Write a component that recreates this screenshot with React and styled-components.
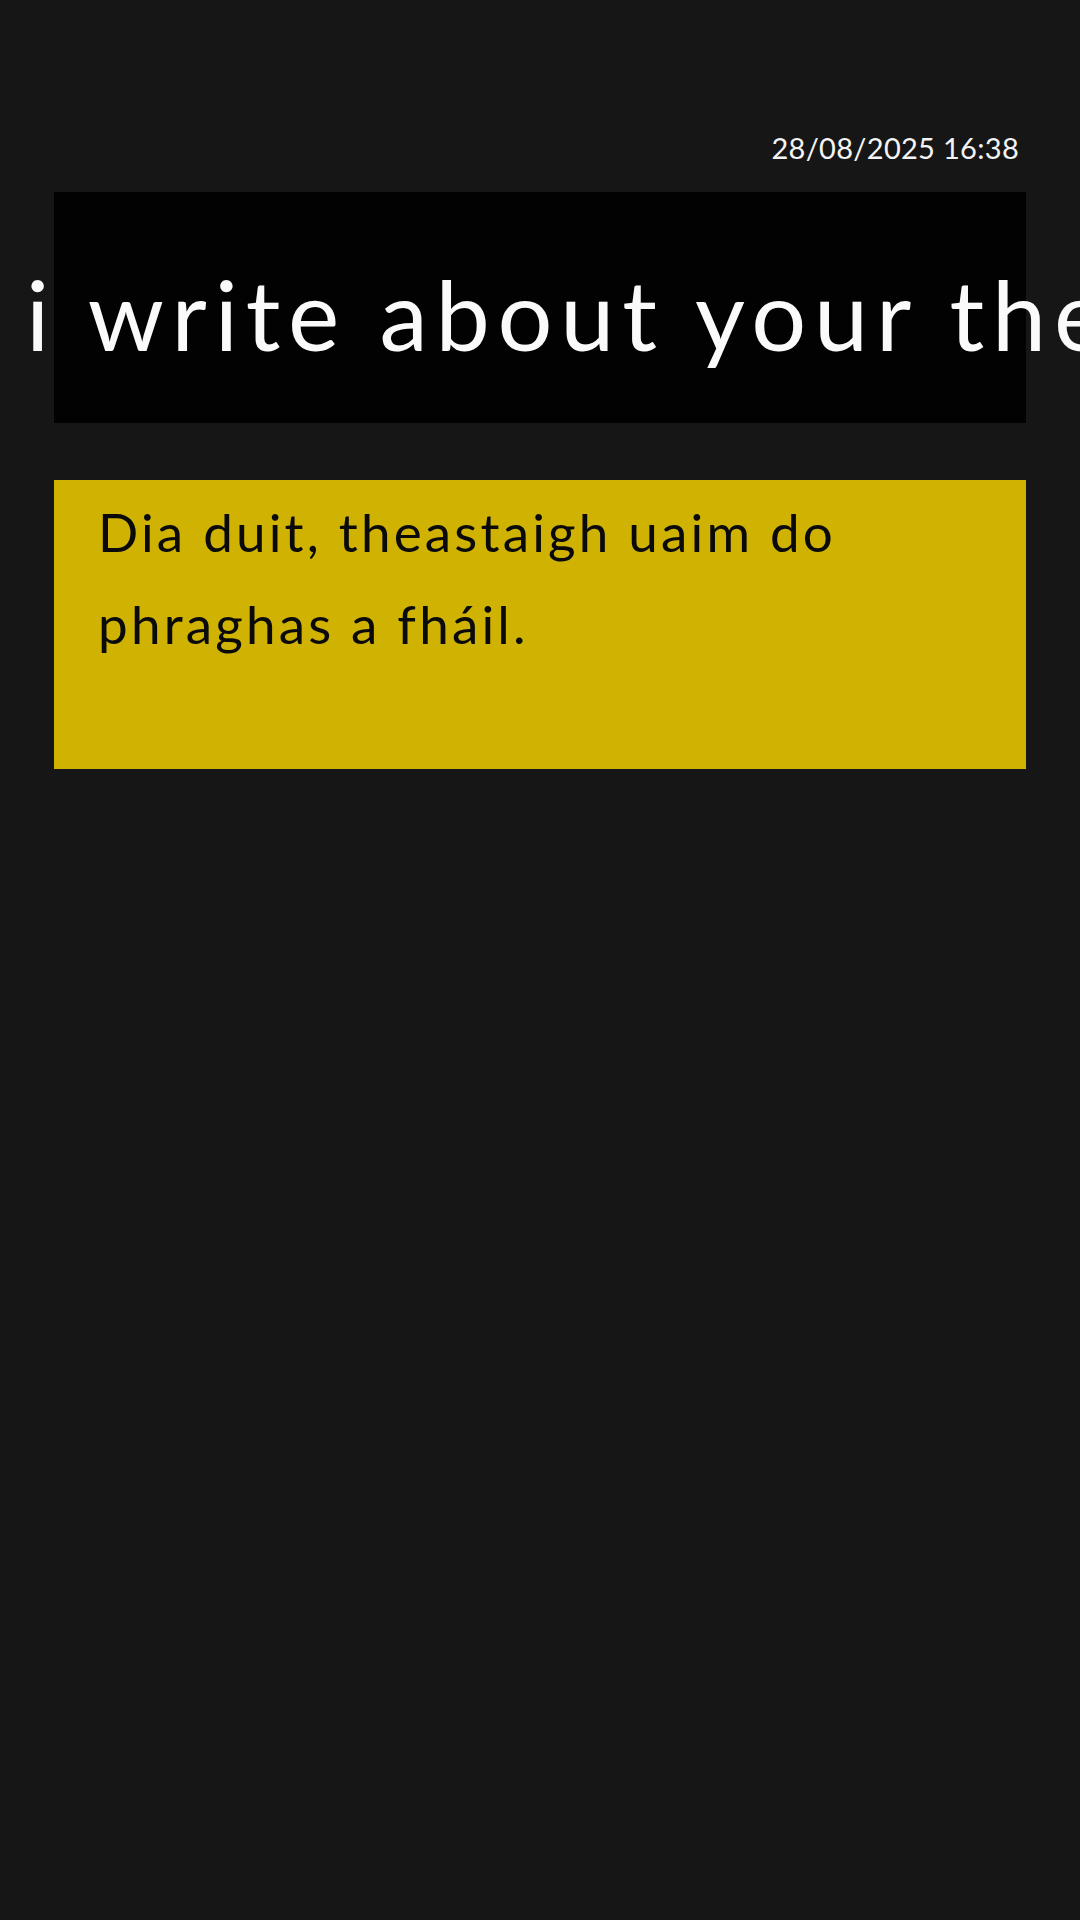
import React from 'react'
import styled, { createGlobalStyle } from 'styled-components'

const GlobalStyle = createGlobalStyle`
  html, body {
    margin: 0;
    padding: 0;
    background: #161616;
    overflow-x: hidden;
  }
  body {
    font-family: Lato, "Noto Sans", sans-serif;
  }
`

const Screen = styled.div`
  width: 1080px;
  height: 1920px;
  background: #161616;
  padding: 128px 54px 0 54px;
  box-sizing: border-box;
  display: flex;
  flex-direction: column;
`

const Stamp = styled.div`
  align-self: flex-end;
  margin-right: 7px;
  font-size: 29px;
  letter-spacing: 0.3px;
  line-height: 40px;
  color: #f4f4f4;
  height: 40px;
  margin-bottom: 24px;
`

const TitleBox = styled.div`
  height: 231px;
  background: #020202;
  display: flex;
  align-items: center;
`

const Title = styled.span`
  margin-left: -28px;
  margin-top: 12px;
  white-space: nowrap;
  font-size: 97px;
  letter-spacing: 0.08em;
  line-height: 1;
  color: #fafafa;
`

const Message = styled.div`
  margin-top: 57px;
  height: 289px;
  box-sizing: border-box;
  background: #d0b302;
  padding: 6px 60px 0 44px;
  font-size: 53px;
  letter-spacing: 0.06em;
  line-height: 92px;
  color: #0a0a0a;
`

const App = () => {
  return (
    <>
      <GlobalStyle />
      <Screen>
        <Stamp>28/08/2025 16:38</Stamp>
        <TitleBox>
          <Title>i write about your thesis</Title>
        </TitleBox>
        <Message>Dia duit, theastaigh uaim do phraghas a fháil.</Message>
      </Screen>
    </>
  )
}

export default App
